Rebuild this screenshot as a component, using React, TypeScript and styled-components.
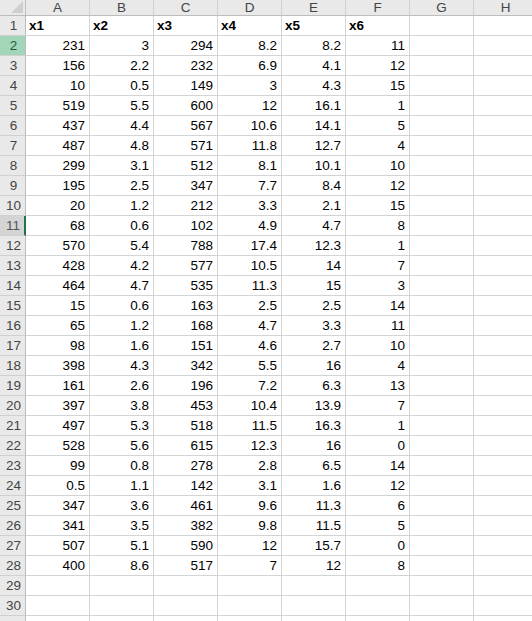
import React from "react";
import styled, { createGlobalStyle, css } from "styled-components";

const GlobalStyle = createGlobalStyle`
  html, body {
    margin: 0;
    padding: 0;
    background: #ffffff;
    overflow: hidden;
  }
  body {
    font-family: "Liberation Sans", Arial, sans-serif;
  }
`;

const COLS = ["A", "B", "C", "D", "E", "F", "G", "H"];

const HEADERS = ["x1", "x2", "x3", "x4", "x5", "x6"];

const DATA: (string | number)[][] = [
  [231, 3, 294, 8.2, 8.2, 11],
  [156, 2.2, 232, 6.9, 4.1, 12],
  [10, 0.5, 149, 3, 4.3, 15],
  [519, 5.5, 600, 12, 16.1, 1],
  [437, 4.4, 567, 10.6, 14.1, 5],
  [487, 4.8, 571, 11.8, 12.7, 4],
  [299, 3.1, 512, 8.1, 10.1, 10],
  [195, 2.5, 347, 7.7, 8.4, 12],
  [20, 1.2, 212, 3.3, 2.1, 15],
  [68, 0.6, 102, 4.9, 4.7, 8],
  [570, 5.4, 788, 17.4, 12.3, 1],
  [428, 4.2, 577, 10.5, 14, 7],
  [464, 4.7, 535, 11.3, 15, 3],
  [15, 0.6, 163, 2.5, 2.5, 14],
  [65, 1.2, 168, 4.7, 3.3, 11],
  [98, 1.6, 151, 4.6, 2.7, 10],
  [398, 4.3, 342, 5.5, 16, 4],
  [161, 2.6, 196, 7.2, 6.3, 13],
  [397, 3.8, 453, 10.4, 13.9, 7],
  [497, 5.3, 518, 11.5, 16.3, 1],
  [528, 5.6, 615, 12.3, 16, 0],
  [99, 0.8, 278, 2.8, 6.5, 14],
  ["0.5", 1.1, 142, 3.1, 1.6, 12],
  [347, 3.6, 461, 9.6, 11.3, 6],
  [341, 3.5, 382, 9.8, 11.5, 5],
  [507, 5.1, 590, 12, 15.7, 0],
  [400, 8.6, 517, 7, 12, 8],
];

const TOTAL_ROWS = 31;

const Sheet = styled.div`
  display: grid;
  grid-template-columns: 26px repeat(8, 64px);
  grid-auto-rows: 20px;
  grid-template-rows: 16px;
  width: 532px;
  height: 621px;
  overflow: hidden;
  font-size: 13.5px;
  color: #000;
`;

const Corner = styled.div`
  position: relative;
  box-sizing: border-box;
  background: #e9e9e9;
  border-right: 1px solid #bdbdbd;
  border-bottom: 1px solid #bdbdbd;
  overflow: hidden;
`;

const CornerTriangle = styled.svg`
  position: absolute;
  right: 2px;
  bottom: 2px;
`;

const ColHeader = styled.div`
  box-sizing: border-box;
  background: #e9e9e9;
  border-right: 1px solid #d0d0d0;
  border-bottom: 1px solid #bdbdbd;
  color: #444;
  font-size: 13.5px;
  display: flex;
  align-items: flex-end;
  justify-content: center;
  line-height: 15px;
  overflow: hidden;
`;

type RowHeadState = "normal" | "selected" | "hover";

const RowHeader = styled.div<{ $state: RowHeadState }>`
  box-sizing: border-box;
  background: #e9e9e9;
  border-right: 1px solid #bdbdbd;
  border-bottom: 1px solid #d0d0d0;
  color: #444;
  font-size: 13.5px;
  display: flex;
  align-items: center;
  justify-content: center;
  padding-left: 2px;
  ${(p) =>
    p.$state === "selected" &&
    css`
      background: #a3d6b8;
      color: #1f5e3c;
    `}
  ${(p) =>
    p.$state === "hover" &&
    css`
      background: #d4d4d4;
      border-right: 2px solid #217346;
      color: #555;
    `}
`;

const Cell = styled.div<{ $head?: boolean }>`
  box-sizing: border-box;
  border-right: 1px solid #d4d4d4;
  border-bottom: 1px solid #d4d4d4;
  display: flex;
  align-items: center;
  justify-content: ${(p) => (p.$head ? "flex-start" : "flex-end")};
  padding: 0 4px 0 3px;
  font-weight: ${(p) => (p.$head ? 700 : 400)};
  white-space: nowrap;
  overflow: hidden;
  background: #fff;
`;

function rowState(r: number): RowHeadState {
  if (r === 2) return "selected";
  if (r === 11) return "hover";
  return "normal";
}

export default function App() {
  const rows: React.ReactNode[] = [];
  for (let r = 1; r <= TOTAL_ROWS; r++) {
    rows.push(
      <RowHeader key={`h${r}`} $state={rowState(r)}>
        {r <= 30 ? r : ""}
      </RowHeader>
    );
    COLS.forEach((_, c) => {
      let content: React.ReactNode = "";
      let head = false;
      if (r === 1 && c < HEADERS.length) {
        content = HEADERS[c];
        head = true;
      } else if (r >= 2 && r - 2 < DATA.length && c < 6) {
        content = String(DATA[r - 2][c]);
      }
      rows.push(
        <Cell key={`${r}-${c}`} $head={head}>
          {content}
        </Cell>
      );
    });
  }

  return (
    <>
      <GlobalStyle />
      <Sheet>
        <Corner>
          <CornerTriangle width="12" height="12" viewBox="0 0 12 12">
            <polygon points="12,0 12,12 0,12" fill="#cfcfcf" />
          </CornerTriangle>
        </Corner>
        {COLS.map((c) => (
          <ColHeader key={c}>{c}</ColHeader>
        ))}
        {rows}
      </Sheet>
    </>
  );
}
